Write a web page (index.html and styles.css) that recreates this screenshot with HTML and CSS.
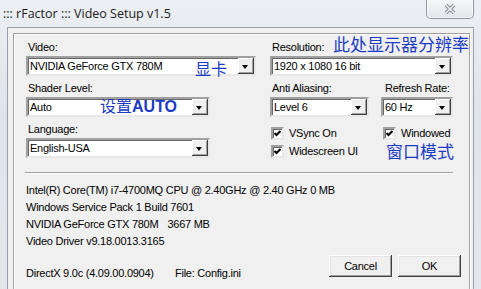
FILE: index.html
```html
<!DOCTYPE html>
<html lang="en">
<head>
  <meta charset="UTF-8">
  <title>rFactor Video Setup</title>
  <link rel="stylesheet" href="styles.css">
</head>
<body>
  <div class="window">
    <div class="titlebar">
      <span class="title">::: rFactor ::: Video Setup v1.5</span>
      <div class="close">
        <svg width="14" height="12" viewBox="0 0 14 12">
          <path d="M3 2 L11 10 M11 2 L3 10" stroke="#868b92" stroke-width="3.6" fill="none"/>
          <path d="M3 2 L11 10 M11 2 L3 10" stroke="#eef0f2" stroke-width="1.6" fill="none"/>
        </svg>
      </div>
    </div>

    <div class="client">
      <div class="group">
        <div class="options">
          <div class="col">
            <div class="label">Video:</div>
            <div class="select video">NVIDIA GeForce GTX 780M<span class="arrow"></span></div>
            <div class="label">Shader Level:</div>
            <div class="select short">Auto<span class="arrow"></span></div>
            <div class="label">Language:</div>
            <div class="select short">English-USA<span class="arrow"></span></div>
          </div>

          <div class="col">
            <div class="label">Resolution:</div>
            <div class="select">1920 x 1080 16 bit<span class="arrow"></span></div>
            <div class="pair">
              <div class="aa">
                <div class="label">Anti Aliasing:</div>
                <div class="select">Level 6<span class="arrow"></span></div>
              </div>
              <div class="rate">
                <div class="label">Refresh Rate:</div>
                <div class="select">60 Hz<span class="arrow"></span></div>
              </div>
            </div>
            <div class="checks">
              <div class="check"><span class="box"></span>VSync On</div>
              <div class="check"><span class="box"></span>Windowed</div>
              <div class="check"><span class="box"></span>Widescreen UI</div>
            </div>
          </div>
        </div>

        <div class="sep"></div>

        <div class="info">
          <div>Intel(R) Core(TM) i7-4700MQ CPU @ 2.40GHz @ 2.40 GHz 0 MB</div>
          <div>Windows Service Pack 1 Build 7601</div>
          <div>NVIDIA GeForce GTX 780M<span class="mem">3667 MB</span></div>
          <div>Video Driver v9.18.0013.3165</div>
        </div>

        <div class="footer">
          <span class="dx">DirectX 9.0c (4.09.00.0904)</span>
          <span class="file">File: Config.ini</span>
          <div class="btn">Cancel</div>
          <div class="btn">OK</div>
        </div>
      </div>
    </div>

    <span class="note note-res">此处显示器分辨率</span>
    <span class="note note-card">显卡</span>
    <span class="note note-auto">设置<b>AUTO</b></span>
    <span class="note note-win">窗口模式</span>
  </div>
</body>
</html>
```

FILE: styles.css
```css
body {
  margin: 0;
  font-family: 'Liberation Sans', Arial, sans-serif;
  font-size: 11px;
  letter-spacing: -0.25px;
  color: #000;
}
.window {
  position: relative;
  width: 481px;
  height: 289px;
  background: linear-gradient(180deg, #eceff3 0%, #dfe4ea 40%, #e4e8ed 100%);
  overflow: hidden;
}
.titlebar {
  height: 27px;
  display: flex;
  align-items: flex-start;
  justify-content: space-between;
}
.title {
  font-family: 'Open Sans', 'Noto Sans', sans-serif;
  font-size: 12.5px;
  letter-spacing: 0;
  padding: 5px 0 0 3px;
  color: #1b1b1b;
}
.close {
  width: 46px;
  height: 19px;
  margin: -1px 7px 0 0;
  border: 1px solid #8e959e;
  border-top: none;
  border-radius: 0 0 5px 5px;
  background: linear-gradient(180deg, #f6f7f9, #e2e6eb);
  box-shadow: inset 0 0 0 1px rgba(255, 255, 255, 0.7);
  display: flex;
  align-items: center;
  justify-content: center;
}

.client {
  height: 256px;
  margin: 0 7px 0 7px;
  border: 1px solid #98a1ab;
  background: #f0f0f0;
  padding: 5px 3px 2px 5px;
}
.group {
  position: relative;
  height: 250px;
  border: 1px solid #a0a0a0;
  box-shadow: inset 1px 1px #fff, 1px 1px #fff;
  padding: 5px 16px 0 12px;
}

.options {
  display: grid;
  grid-template-columns: 230px 183px;
  column-gap: 14px;
}
.label {
  height: 16px;
  line-height: 16px;
  padding-left: 2px;
  margin-bottom: 1px;
}
.col .select {
  margin-bottom: 4px;
}
.select {
  position: relative;
  height: 16px;
  line-height: 16px;
  padding-left: 2px;
  background: #fff;
  border: 2px solid;
  border-color: #a0a0a0 #e8e8e8 #e8e8e8 #a0a0a0;
  box-shadow: inset 1px 1px #696969;
  white-space: nowrap;
}
.select.video {
  width: 224px;
}
.select.short {
  width: 178px;
}
.arrow {
  position: absolute;
  right: 0;
  top: 0;
  width: 16px;
  height: 16px;
  box-sizing: border-box;
  background: #f0f0f0;
  box-shadow: inset -1px -1px #404040, inset 1px 1px #fff, inset -2px -2px #a0a0a0;
}
.arrow::after {
  content: "";
  position: absolute;
  left: 4px;
  top: 7px;
  border-left: 3.5px solid transparent;
  border-right: 3.5px solid transparent;
  border-top: 4px solid #000;
}

.pair {
  display: flex;
  justify-content: space-between;
}
.aa {
  width: 99px;
}
.rate {
  width: 72px;
}
.rate .label {
  padding-left: 4px;
}

.checks {
  display: grid;
  grid-template-columns: 112px 70px;
  row-gap: 2px;
  margin-top: 4px;
  padding-left: 1px;
}
.check {
  display: flex;
  align-items: center;
  height: 16px;
  gap: 5px;
}
.box {
  width: 9px;
  height: 9px;
  background: #fff url("data:image/svg+xml,%3Csvg xmlns='http://www.w3.org/2000/svg' width='9' height='9'%3E%3Cpath d='M1.5 4 L3.5 6 L7.5 2' stroke='%23000' stroke-width='2' fill='none'/%3E%3C/svg%3E") no-repeat;
  border: 2px solid;
  border-color: #a0a0a0 #e8e8e8 #e8e8e8 #a0a0a0;
  box-shadow: inset 1px 1px #696969;
}

.sep {
  margin: 10px 0 0 -1px;
  height: 1px;
  background: #a0a0a0;
  border-bottom: 1px solid #fff;
}
.info {
  margin-top: 8px;
  line-height: 17px;
}
.mem {
  margin-left: 9px;
}

.footer {
  display: flex;
  align-items: flex-end;
  margin: 5px -8px 0 0;
}
.dx {
  width: 149px;
  margin-bottom: -2px;
}
.file {
  flex: 1;
  margin-bottom: -2px;
}
.btn {
  width: 63px;
  height: 22px;
  line-height: 22px;
  text-align: center;
  background: #f0f0f0;
  box-shadow: inset -1px -1px #404040, inset 1px 1px #fff, inset -2px -2px #a0a0a0, inset 2px 2px #e3e3e3;
  margin-left: 6px;
}

.note {
  position: absolute;
  color: #1c3bc4;
  font-family: 'Noto Sans CJK SC', sans-serif;
  letter-spacing: 0;
  line-height: 1;
  white-space: nowrap;
}
.note-res {
  left: 333px;
  top: 35px;
  font-size: 17px;
}
.note-card {
  left: 195px;
  top: 60px;
  font-size: 16px;
}
.note-auto {
  left: 100px;
  top: 97px;
  font-size: 16px;
}
.note-auto b {
  font-family: 'Liberation Sans', Arial, sans-serif;
  font-size: 16px;
}
.note-win {
  left: 386px;
  top: 142px;
  font-size: 17px;
}
```
